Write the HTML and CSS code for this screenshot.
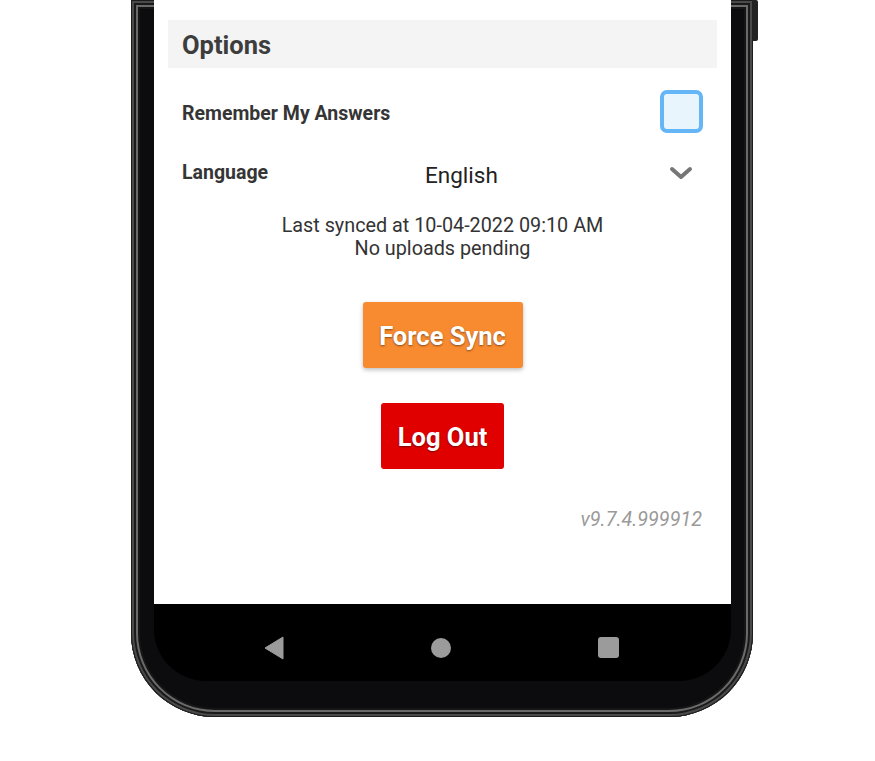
FILE: index.html
```html
<!DOCTYPE html>
<html>
<head>
<meta charset="utf-8">
<link rel="stylesheet" href="styles.css">
</head>
<body>
<div class="stage">
  <div class="phone">
    <div class="side-button"></div>
    <div class="screen">
      <div class="content">
        <div class="section-header">Options</div>
        <div class="row row-remember">
          <span class="label">Remember My Answers</span>
          <span class="checkbox"></span>
        </div>
        <div class="row row-language">
          <span class="label">Language</span>
          <span class="select-value">English</span>
          <svg class="chevron" width="26" height="18" viewBox="0 0 26 18"><path d="M4 5 L13 13 L22 5" fill="none" stroke="#767676" stroke-width="4" stroke-linecap="round" stroke-linejoin="round"/></svg>
        </div>
        <div class="sync-info">
          <div>Last synced at 10-04-2022 09:10 AM</div>
          <div>No uploads pending</div>
        </div>
        <div class="btn-wrap"><button class="btn btn-sync">Force Sync</button></div>
        <div class="btn-wrap"><button class="btn btn-logout">Log Out</button></div>
        <div class="version">v9.7.4.999912</div>
      </div>
      <div class="navbar">
        <svg class="nav-icon" width="20" height="24" viewBox="0 0 20 24"><path d="M19 1 L19 23 L1 12 Z" fill="#9b9b9b" stroke="#9b9b9b" stroke-width="1" stroke-linejoin="round"/></svg>
        <span class="nav-home"></span>
        <span class="nav-recent"></span>
      </div>
    </div>
  </div>
</div>
</body>
</html>
```
FILE: styles.css
```css
html, body {
  margin: 0;
  padding: 0;
  background: #ffffff;
}
body {
  width: 875px;
  height: 761px;
  overflow: hidden;
  font-family: Roboto, "Liberation Sans", sans-serif;
}
.stage {
  padding-left: 131px;
}
.phone {
  position: relative;
  box-sizing: border-box;
  width: 622px;
  height: 717px;
  background: #0c0b0e;
  border-radius: 0 0 84px 84px;
  padding: 0 21px 36px 23px;
  box-shadow:
    inset 0 0 0 1px #1c1c1c,
    inset 0 0 0 3px #4a4a4a,
    inset 0 0 0 5px #1a1a1a,
    inset 0 0 0 7px #6a6a6a,
    inset 0 0 0 9px #151515;
}
.side-button {
  position: absolute;
  right: -5px;
  top: 0;
  width: 6px;
  height: 41px;
  background: #222;
  border-radius: 0 2px 2px 0;
}
.screen {
  display: flex;
  flex-direction: column;
  height: 681px;
  width: 577px;
}
.content {
  background: #fff;
  height: 604px;
  box-sizing: border-box;
  padding: 20px 14px 0 14px;
  display: flex;
  flex-direction: column;
}
.section-header {
  background: #f4f4f4;
  height: 48px;
  line-height: 50px;
  padding-left: 14px;
  font-size: 25.5px;
  font-weight: 700;
  color: #3d3d3d;
}
.row {
  display: flex;
  align-items: center;
  padding: 0 14px 0 14px;
}
.row-remember {
  margin-top: 22px;
  height: 43px;
  justify-content: space-between;
}
.label {
  font-size: 19.5px;
  font-weight: 700;
  color: #353535;
}
.row-remember .label {
  margin-top: 3px;
}
.checkbox {
  box-sizing: border-box;
  width: 43px;
  height: 43px;
  border: 4px solid #64b6f7;
  border-radius: 7px;
  background: #e9f5fd;
}
.row-language {
  margin-top: 21px;
  height: 40px;
}
.row-language .label {
  width: 243px;
  margin-top: -3px;
}
.select-value {
  flex: 1;
  font-size: 22.5px;
  color: #222;
  margin-top: 2px;
}
.chevron {
  display: block;
  margin-right: 9px;
  margin-top: -2px;
}
.sync-info {
  margin-top: 20px;
  text-align: center;
  font-size: 19.8px;
  line-height: 23px;
  color: #333;
}
.btn-wrap {
  display: flex;
  justify-content: center;
}
.btn {
  border: none;
  color: #fff;
  font-family: Roboto, "Liberation Sans", sans-serif;
  font-weight: 700;
  font-size: 25.5px;
  height: 66px;
  border-radius: 3px;
  padding: 2px 0 0 0;
  text-shadow: 0 1px 2px rgba(0,0,0,0.45);
}
.btn-sync {
  margin-top: 42px;
  width: 160px;
  background: #f88a30;
  box-shadow: 0 2px 4px rgba(0,0,0,0.25);
}
.btn-logout {
  margin-top: 35px;
  width: 123px;
  background: #e10000;
}
.version {
  margin-top: 40px;
  text-align: right;
  padding-right: 15px;
  font-size: 19.8px;
  line-height: 22px;
  font-style: italic;
  color: #9a9a9a;
}
.navbar {
  height: 77px;
  box-sizing: border-box;
  padding: 10px 112px 0 110px;
  background: #000;
  border-radius: 0 0 52px 52px;
  display: flex;
  align-items: center;
  justify-content: space-between;
}
.nav-icon {
  display: block;
}
.nav-home {
  width: 20px;
  height: 20px;
  border-radius: 50%;
  background: #9b9b9b;
}
.nav-recent {
  width: 21px;
  height: 21px;
  border-radius: 3px;
  background: #9b9b9b;
}
```
